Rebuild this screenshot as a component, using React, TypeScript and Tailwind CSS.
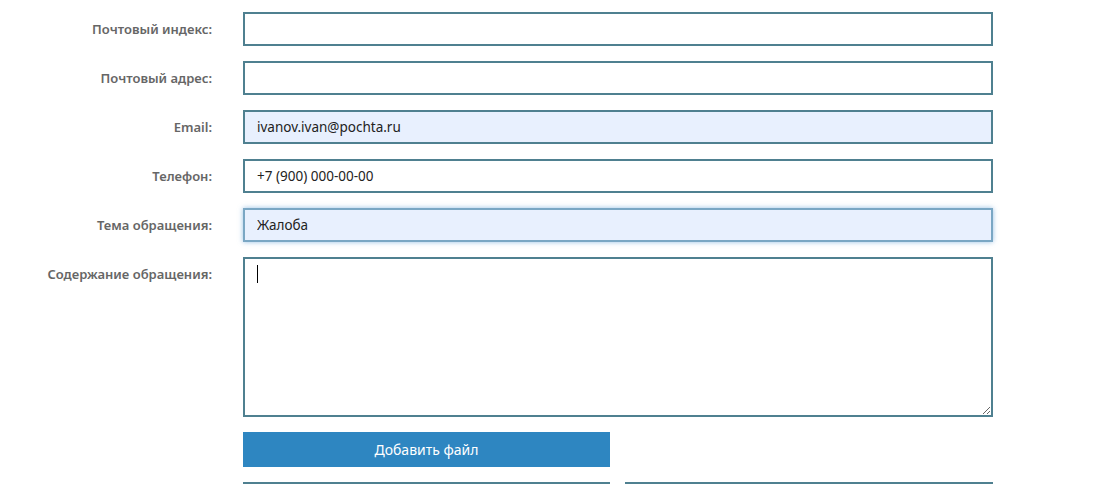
import React from "react";

const labelCls =
  "w-[212px] shrink-0 text-right text-[13px] font-semibold text-[#666] leading-[34px]";
const inputBase =
  "h-[34px] w-[750px] border-2 px-[12px] text-[13.5px] text-[#222] outline-none box-border";

function Row({ label, children }: { label: string; children: React.ReactNode }) {
  return (
    <div className="flex items-start gap-[31px] mb-[15px]">
      <div className={labelCls}>{label}</div>
      {children}
    </div>
  );
}

export default function App() {
  return (
    <div
      className="w-[1110px] h-[484px] overflow-hidden bg-white pt-[12px]"
      style={{ fontFamily: '"Noto Sans", "Open Sans", sans-serif' }}
    >
      <Row label="Почтовый индекс:">
        <input className={`${inputBase} border-[#4f8090] bg-white`} defaultValue="" />
      </Row>
      <Row label="Почтовый адрес:">
        <input className={`${inputBase} border-[#4f8090] bg-white`} defaultValue="" />
      </Row>
      <Row label="Email:">
        <input
          className={`${inputBase} border-[#4f8090] bg-[#e8f0fe]`}
          defaultValue="ivanov.ivan@pochta.ru"
        />
      </Row>
      <Row label="Телефон:">
        <input
          className={`${inputBase} border-[#4f8090] bg-white`}
          defaultValue="+7 (900) 000-00-00"
        />
      </Row>
      <Row label="Тема обращения:">
        <input
          className={`${inputBase} border-[#7aa7c4] bg-[#e8f0fe] shadow-[0_0_5px_rgba(80,150,210,0.6)]`}
          defaultValue="Жалоба"
        />
      </Row>
      <div className="flex items-start gap-[31px] mb-[15px]">
        <div className={labelCls}>Содержание обращения:</div>
        <div className="relative">
          <textarea
            className="block h-[160px] w-[750px] border-2 border-[#4f8090] bg-white px-[12px] py-[6px] text-[13.5px] text-[#222] outline-none box-border"
            defaultValue=""
          />
          <div className="absolute left-[14px] top-[8px] h-[18px] w-px bg-black" />
        </div>
      </div>
      <div className="flex gap-[31px]">
        <div className="w-[212px] shrink-0" />
        <div className="flex flex-col">
          <button className="h-[35px] w-[367px] bg-[#2e86c1] text-[14px] text-white">
            Добавить файл
          </button>
          <div className="mt-[15px] flex gap-[15px]">
            <div className="h-[20px] w-[367px] border-t-2 border-[#4f8090]" />
            <div className="h-[20px] w-[368px] border-t-2 border-[#4f8090]" />
          </div>
        </div>
      </div>
    </div>
  );
}
